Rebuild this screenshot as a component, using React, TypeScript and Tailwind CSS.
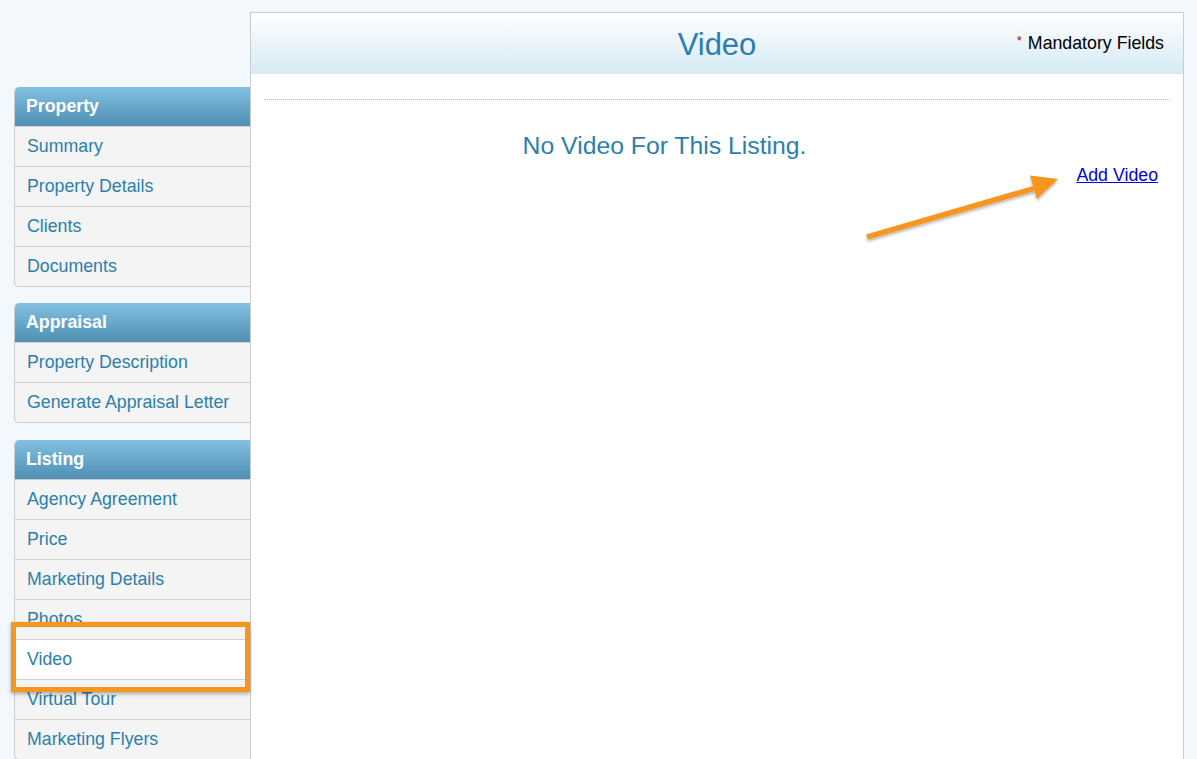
import React from 'react'

interface NavGroup {
  title: string
  items: string[]
}

const groups: NavGroup[] = [
  { title: 'Property', items: ['Summary', 'Property Details', 'Clients', 'Documents'] },
  { title: 'Appraisal', items: ['Property Description', 'Generate Appraisal Letter'] },
  {
    title: 'Listing',
    items: ['Agency Agreement', 'Price', 'Marketing Details', 'Photos', 'Video', 'Virtual Tour', 'Marketing Flyers'],
  },
]

const activeItem = 'Video'

const Sidebar = () => (
  <div className="w-[236px] shrink-0 ml-[14px] pt-[87px] flex flex-col">
    {groups.map((group, idx) => (
      <div
        key={group.title}
        className={`rounded-l-[5px] border-l border-b border-[#cccccc] bg-[#f4f4f4] overflow-hidden ${
          idx === 0 ? 'mb-[16px]' : 'mb-[17px]'
        }`}
      >
        <div className="h-[39px] flex items-center pl-[12px] -ml-px text-white font-bold text-[17.75px] bg-gradient-to-b from-[#82c1e2] to-[#4f8fb4] rounded-tl-[5px]">
          {group.title}
        </div>
        {group.items.map((item) => (
          <div
            key={item}
            className={`h-[40px] flex items-center pl-[12px] border-t border-[#cfcfcf] text-[17.75px] text-[#2b7fae] ${
              item === activeItem ? 'bg-white' : ''
            }`}
          >
            {item}
          </div>
        ))}
      </div>
    ))}
  </div>
)

const MainPanel = () => (
  <div className="mt-[12px] w-[934px] min-h-[760px] border border-[#cccccc] bg-white">
    <div className="relative h-[61px] flex items-center justify-center bg-gradient-to-b from-white to-[#d6e9f4]">
      <h1 className="text-[31px] text-[#2b7fae] leading-none pt-[2px]">Video</h1>
      <div className="absolute right-[19px] top-0 h-full flex items-center text-[17.75px] text-black">
        <span className="text-[#cc0000] text-[13px] mr-[6px] -mt-[5px]">*</span>
        Mandatory Fields
      </div>
    </div>
    <div className="px-[13px] pt-[25px]">
      <div className="border-t border-dotted border-[#bbbbbb]" />
    </div>
    <div className="pr-[105px] pt-[31px] text-center text-[24.75px] leading-[30px] text-[#2b7fae]">
      No Video For This Listing.
    </div>
    <div className="flex justify-end pr-[25px] pt-[3px]">
      <a href="#" className="text-[17.75px] leading-[22px] text-[#0000ee] underline">
        Add Video
      </a>
    </div>
  </div>
)

const Annotations = () => (
  <>
    <div className="absolute left-[11px] top-[622px] w-[239px] h-[70px] border-[5px] border-[#f7961f] shadow-[0_2px_4px_rgba(0,0,0,0.3)]" />
    <svg className="absolute left-0 top-0 pointer-events-none" width="1197" height="759" viewBox="0 0 1197 759">
      <defs>
        <filter id="arrowShadow" x="-10%" y="-10%" width="120%" height="130%">
          <feDropShadow dx="0" dy="2" stdDeviation="1.5" floodColor="#000" floodOpacity="0.3" />
        </filter>
      </defs>
      <g filter="url(#arrowShadow)" fill="#f7961f">
        <path d="M866 234.5 L1033 186 L1035 191 L868 239.5 Z" />
        <path d="M1058 179 L1030 175.5 L1037 199 Z" />
      </g>
    </svg>
  </>
)

export default function App() {
  return (
    <div
      className="relative w-[1197px] h-[759px] overflow-hidden bg-[#f3f8fc]"
      style={{ fontFamily: '"Liberation Sans", Arial, Helvetica, sans-serif' }}
    >
      <div className="flex">
        <Sidebar />
        <MainPanel />
      </div>
      <Annotations />
    </div>
  )
}
